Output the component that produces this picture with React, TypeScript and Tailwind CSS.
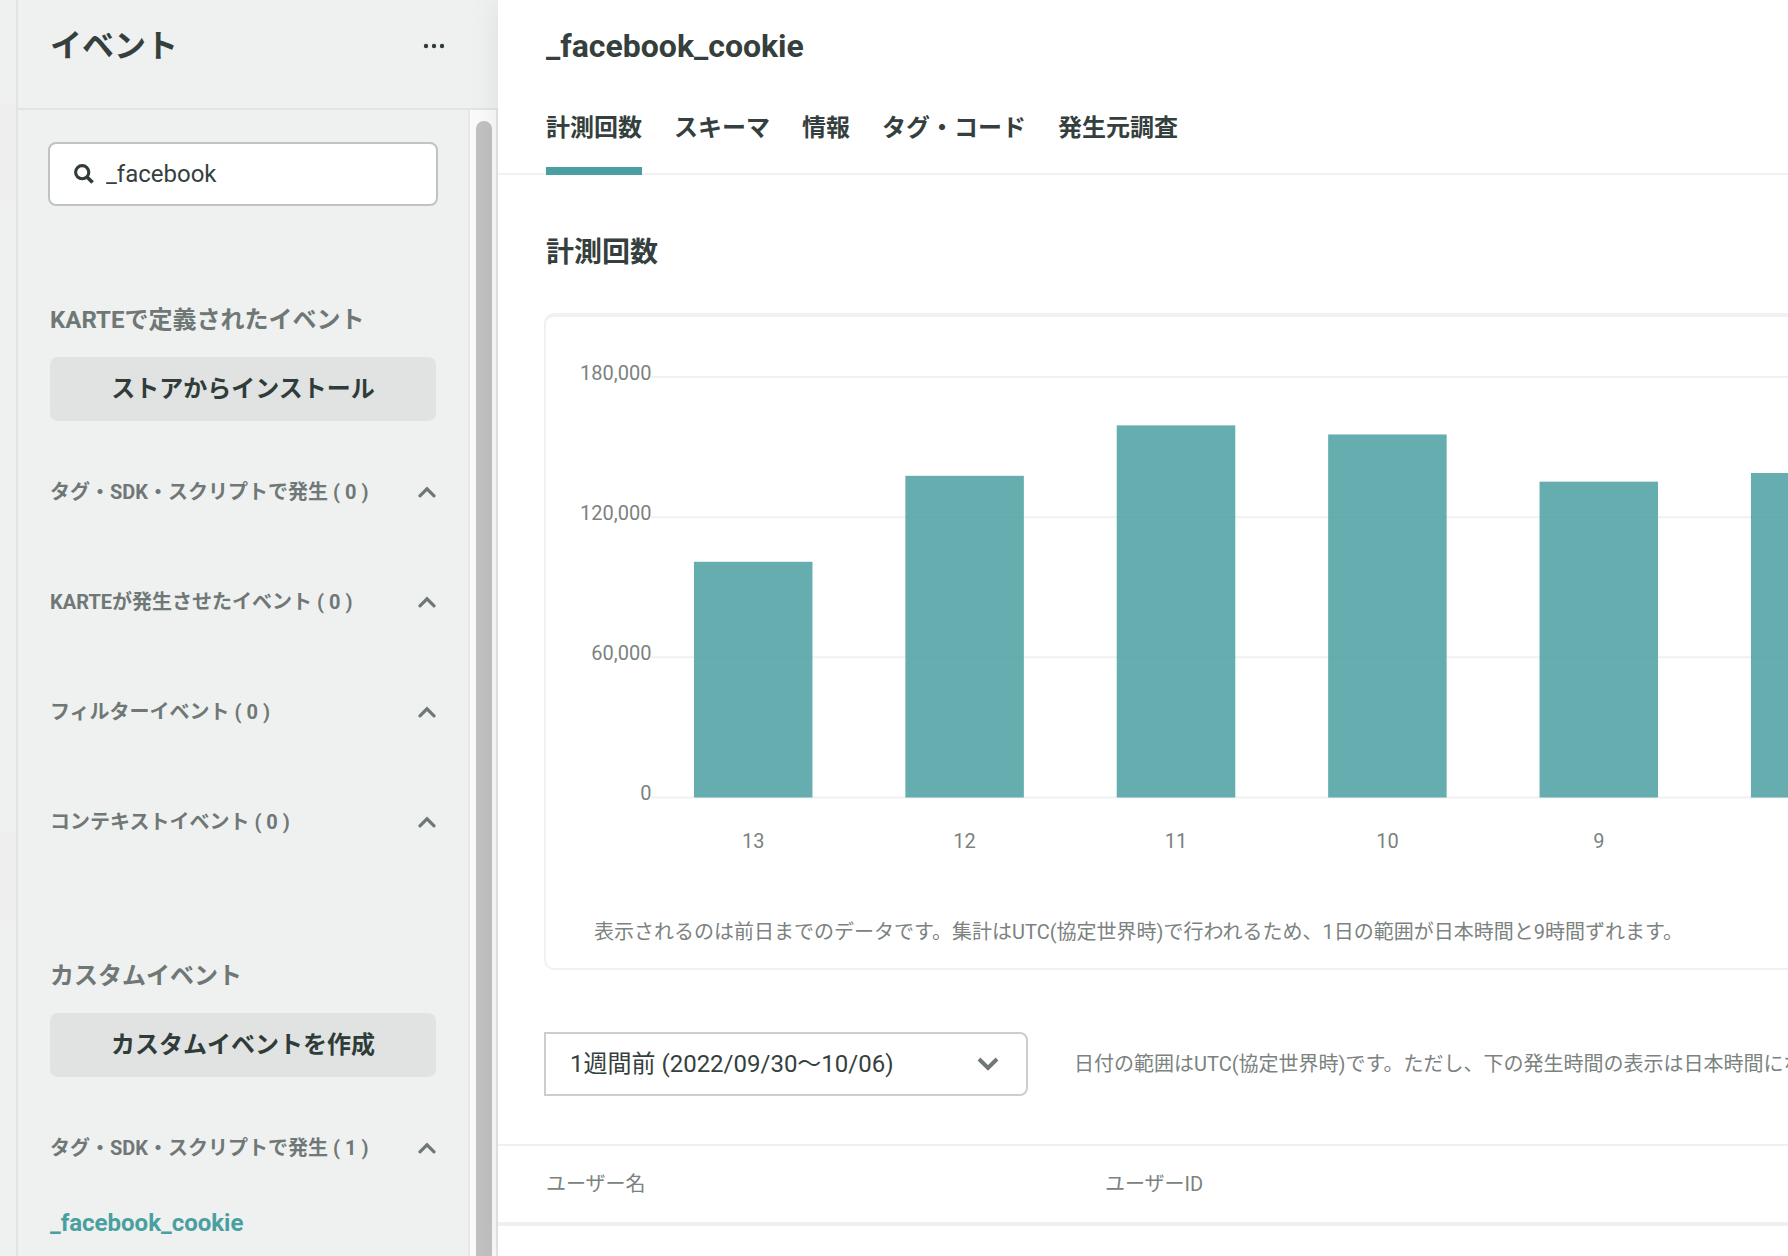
import { useState } from 'react';

const counts = [
  { day: '13', value: 100900 },
  { day: '12', value: 137700 },
  { day: '11', value: 159300 },
  { day: '10', value: 155400 },
  { day: '9', value: 135200 },
  { day: '8', value: 138900 },
];

const ticks = [180000, 120000, 60000, 0];

const CHART = {
  width: 1600,
  height: 560,
  top: 60,
  bottom: 480.5,
  left: 101.5,
  slot: 211.4,
  bar: 118.5,
  max: 180000,
};

function yFor(value: number) {
  return CHART.bottom - (value / CHART.max) * (CHART.bottom - CHART.top);
}

function CountChart() {
  return (
    <svg width={CHART.width} height={CHART.height} className="block max-w-none" role="img" aria-label="計測回数">
      {ticks.map((tick) => (
        <g key={tick}>
          <line x1={105} x2={CHART.width} y1={yFor(tick)} y2={yFor(tick)} stroke="#f0f1f1" strokeWidth={2} />
          <text x={105.5} y={Math.floor(yFor(tick)) + 3} textAnchor="end" fontSize={20} fill="#7b8280">
            {tick.toLocaleString('en-US')}
          </text>
        </g>
      ))}
      {counts.map((c, i) => {
        const center = CHART.left + CHART.slot * (i + 0.5);
        const y = yFor(c.value);
        return (
          <g key={c.day}>
            <rect
              x={center - CHART.bar / 2}
              y={y}
              width={CHART.bar}
              height={CHART.bottom - y}
              fill="#4a9fa0"
              fillOpacity={0.85}
            />
            <text x={center} y={530.5} textAnchor="middle" fontSize={20} fill="#7b8280">
              {c.day}
            </text>
          </g>
        );
      })}
    </svg>
  );
}

function ChevronUp() {
  return (
    <svg width="18" height="12" viewBox="0 0 18 12" fill="none" className="shrink-0">
      <path d="M2 9.8 L9 2.8 L16 9.8" stroke="#6f7876" strokeWidth="3.2" strokeLinecap="round" />
    </svg>
  );
}

function EventGroup({ label, count, children }: { label: string; count: number; children?: React.ReactNode }) {
  const [open, setOpen] = useState(true);

  return (
    <div>
      <button
        type="button"
        aria-expanded={open}
        onClick={() => setOpen(!open)}
        className="flex h-[30px] w-full items-center justify-between text-left text-xl font-bold text-[#6f7876]"
      >
        <span>
          {label} ( {count} )
        </span>
        <ChevronUp />
      </button>
      {open && children}
    </div>
  );
}

function Section({ title, action, children }: { title: string; action: string; children: React.ReactNode }) {
  return (
    <section>
      <h2 className="text-2xl font-bold text-[#6f7876]">{title}</h2>
      <button
        type="button"
        className="mt-[21px] h-16 w-full rounded-lg bg-[#e1e3e2] text-2xl font-bold text-[#2f3c39]"
      >
        {action}
      </button>
      <div className="mt-14 flex flex-col gap-20">{children}</div>
    </section>
  );
}

function Sidebar() {
  const [query, setQuery] = useState('_facebook');

  return (
    <aside className="flex w-[482px] shrink-0 flex-col border-l-2 border-[#e2e4e3] bg-[#eff1f0]">
      <div className="flex h-[110px] shrink-0 items-start justify-between border-b-2 border-[#e2e4e3] pt-6 pr-[52px] pl-8">
        <h1 className="text-[32px] leading-[44px] font-bold">イベント</h1>
        <button type="button" aria-label="メニュー" className="flex h-[44px] items-center">
          <svg width="24" height="8" viewBox="0 0 24 8" fill="#2f3c39">
            <circle cx="4" cy="4" r="2.2" />
            <circle cx="12" cy="4" r="2.2" />
            <circle cx="20" cy="4" r="2.2" />
          </svg>
        </button>
      </div>
      <div className="flex min-h-0 flex-1">
        <div className="flex-1 overflow-hidden px-8 pt-8">
          <label className="-mx-0.5 flex h-16 items-center gap-3 rounded-lg border-2 border-[#bfc3c2] bg-white px-6">
            <svg width="20" height="20" viewBox="0 0 20 20" fill="none" stroke="#2f3c39" className="shrink-0">
              <circle cx="8.2" cy="8.2" r="6.6" strokeWidth="3.1" />
              <path d="M13 13 L18.6 18.6" strokeWidth="3.6" />
            </svg>
            <input
              type="text"
              aria-label="イベントを検索"
              value={query}
              onChange={(e) => setQuery(e.target.value)}
              className="w-full min-w-0 bg-transparent text-2xl outline-none"
            />
          </label>
          <div className="mt-[98px] flex flex-col gap-[123px]">
            <Section title="KARTEで定義されたイベント" action="ストアからインストール">
              <EventGroup label="タグ・SDK・スクリプトで発生" count={0} />
              <EventGroup label="KARTEが発生させたイベント" count={0} />
              <EventGroup label="フィルターイベント" count={0} />
              <EventGroup label="コンテキストイベント" count={0} />
            </Section>
            <Section title="カスタムイベント" action="カスタムイベントを作成">
              <EventGroup label="タグ・SDK・スクリプトで発生" count={1}>
                <a href="#facebook-cookie" className="mt-11 block text-2xl font-bold text-[#4a9fa0]">
                  _facebook_cookie
                </a>
              </EventGroup>
            </Section>
          </div>
        </div>
        {/* Scroll track */}
        <div className="w-[30px] shrink-0 border-x-2 border-[#e6e6e6] bg-[#fafafa] px-1.5 pt-[11px]">
          <div className="h-full w-4 rounded-t-full bg-[#c1c1c1]" />
        </div>
      </div>
    </aside>
  );
}

const tabs = ['計測回数', 'スキーマ', '情報', 'タグ・コード', '発生元調査'];

export default function App() {
  const [tab, setTab] = useState(tabs[0]);

  return (
    <div className="flex h-screen overflow-hidden bg-white font-['Roboto','Noto_Sans_CJK_JP',sans-serif] text-[#353f3d]">
      <div className="w-4 shrink-0 bg-[#eff1f0] pt-[104px]">
        <div className="h-24 bg-[#efeeee]" />
        <div className="mt-[632px] h-[88px] bg-[#efeeee]" />
      </div>
      <Sidebar />
      <main className="relative min-w-0 flex-1 overflow-hidden bg-white shadow-[0_0_30px_rgba(0,0,0,0.08)]">
        <header className="border-b-2 border-[#f0f1f1] px-12 pt-6">
          <h1 className="text-[32px] leading-[44px] font-bold">_facebook_cookie</h1>
          <nav className="mt-10 -mb-0.5 flex gap-8">
            {tabs.map((t) => (
              <button
                key={t}
                type="button"
                onClick={() => setTab(t)}
                className={`h-[67px] shrink-0 border-b-8 pb-5 text-2xl font-bold ${
                  t === tab ? 'border-[#4a9fa0]' : 'border-transparent'
                }`}
              >
                {t}
              </button>
            ))}
          </nav>
        </header>

        <div className="pl-[46px]">
          <h2 className="mt-[58px] pl-0.5 text-[28px] leading-10 font-bold">計測回数</h2>
          <div className="mt-10 -mr-4 overflow-hidden rounded-[10px] border-2 border-t-4 border-[#f0f1f1] pb-[22px]">
            <CountChart />
            <p className="mt-[41px] pl-12 text-xl text-[#7b8280]">
              表示されるのは前日までのデータです。集計はUTC(協定世界時)で行われるため、1日の範囲が日本時間と9時間ずれます。
            </p>
          </div>

          <div className="mt-[62px] flex items-center gap-[46px]">
            <div className="relative w-[484px] shrink-0">
              <select
                aria-label="期間"
                className="h-16 w-full appearance-none rounded-r-lg border-2 border-[#cccecd] bg-white pr-16 pl-6 text-2xl"
              >
                <option>1週間前 (2022/09/30〜10/06)</option>
              </select>
              <svg
                width="22"
                height="14"
                viewBox="0 0 22 14"
                fill="none"
                className="pointer-events-none absolute top-[25px] right-[29px]"
              >
                <path d="M2 2 L11 11 L20 2" stroke="#6f7876" strokeWidth="4" />
              </svg>
            </div>
            <p className="text-xl whitespace-nowrap text-[#7b8280]">
              日付の範囲はUTC(協定世界時)です。ただし、下の発生時間の表示は日本時間になります。
            </p>
          </div>
        </div>

        <table className="mt-12 w-full text-left text-xl text-[#7b8280]">
          <thead>
            <tr className="border-t-2 border-b-4 border-[#eef0ef]">
              <th className="h-[79px] w-[559px] pl-12 font-normal">ユーザー名</th>
              <th className="h-[79px] pl-12 font-normal">ユーザーID</th>
            </tr>
          </thead>
        </table>
      </main>
    </div>
  );
}
